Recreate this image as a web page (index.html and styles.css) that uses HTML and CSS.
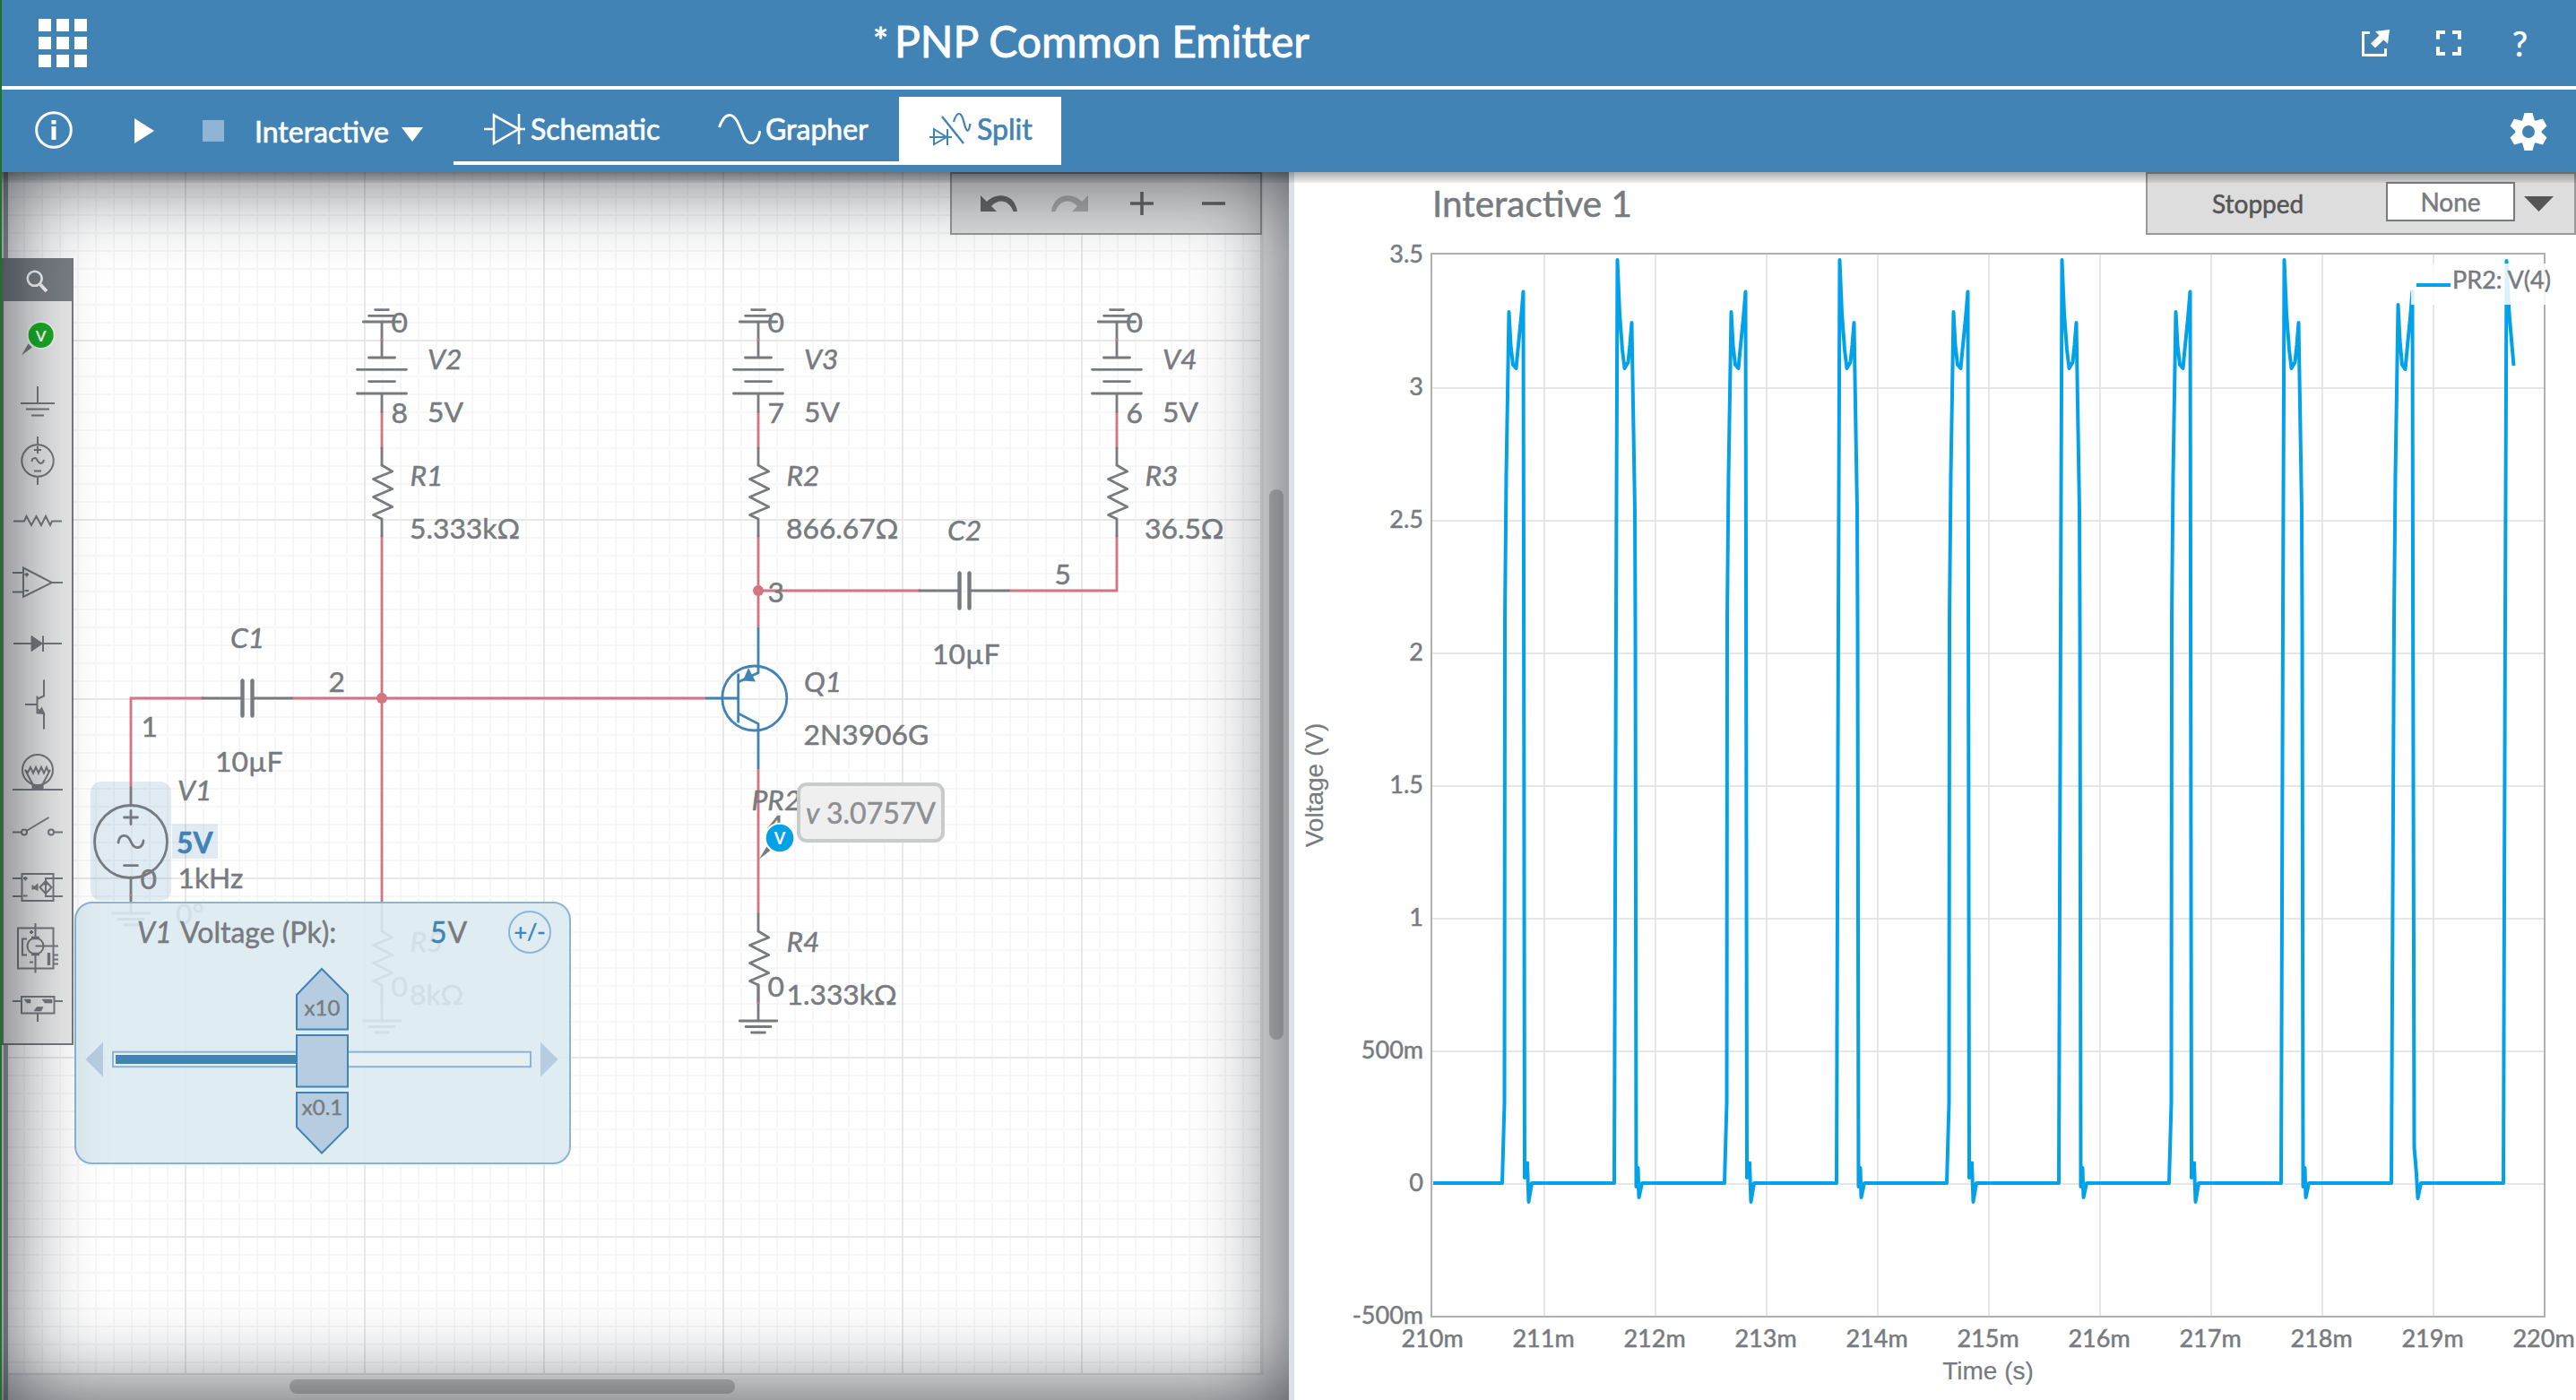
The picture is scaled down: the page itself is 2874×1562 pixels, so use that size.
FILE: index.html
```html
<!DOCTYPE html>
<html lang="en">
<head>
<meta charset="utf-8">
<title>PNP Common Emitter</title>
<link rel="stylesheet" href="styles.css">
</head>
<body>
<header class="titlebar">
  <div class="apps"><i></i><i></i><i></i><i></i><i></i><i></i><i></i><i></i><i></i></div>
  <h1 class="doc-title"><span class="dirty">*</span><span class="doc-name">PNP Common Emitter</span></h1>
  <nav class="title-actions">
    <svg width="34" height="34" viewBox="2633 30 34 34"><path d="M2643 35.5H2635.500V60.500H2660.500V53" fill="none" stroke="#fff" stroke-width="3"/><path d="M2649 34l16-2-2 16-4.500-4.500-9.500 9-5-5 9.500-9z" fill="#fff"/></svg>
    <svg width="28" height="28" viewBox="0 0 28 28"><path d="M10 2H2v8M18 2h8v8M26 18v8h-8M10 26H2v-8" fill="none" stroke="#fff" stroke-width="4"/></svg>
    <span class="help">?</span>
  </nav>
</header>
<section class="toolbar">
  <svg class="info" width="42" height="42" viewBox="0 0 42 42"><circle cx="21" cy="21" r="19.300" fill="none" stroke="#fff" stroke-width="3"/><path d="M18.500 10h5v4.500h-5zM18.500 17h5v15h-5z" fill="#fff"/></svg>
  <svg class="play" width="22" height="28" viewBox="0 0 22 28"><path d="M0 0L22 14L0 28z" fill="#fff"/></svg>
  <span class="stop"></span>
  <span class="mode">Interactive</span>
  <svg class="caret" width="24" height="16" viewBox="0 0 24 16"><path d="M0 0H24L12 16z" fill="#fff"/></svg>
  <div class="tabs">
    <a class="tab tab-schematic"><svg width="46" height="36" viewBox="540 125 46 36" fill="none" stroke="#fff" stroke-width="2.600"><path d="M540 143h11M551 127.500v31.500L578.500 143zM579 126v34M579 143h7"/></svg><span>Schematic</span></a>
    <a class="tab tab-grapher"><svg width="48" height="36" viewBox="801 128 48 36" fill="none" stroke="#fff" stroke-width="2.800"><path d="M802.500 144C806 134 810 130.500 814 130.500C822 130.500 826 146 830 155C833 161 837 162 840 161.500C844 160 847 154 848 148"/></svg><span>Grapher</span></a>
    <a class="tab tab-split"><svg width="48" height="40" viewBox="1036 124 48 40" fill="none" stroke="#4283b6" stroke-width="2"><path d="M1037 153h25M1042 144v17L1056 153zM1057 144v18"/><path d="M1051 130L1075 160" stroke-width="2.400"/><path d="M1064 136C1066 129 1068 127 1070 127C1074 127 1075 136 1077 142C1079 148 1081 147 1082.500 138" stroke-width="2.200"/></svg><span>Split</span></a>
  </div>
  <svg class="gear" width="42" height="42" viewBox="-21 -21 42 42"><g fill="#fff"><circle r="14.500"/><g id="teeth"><path d="M-7 -12L-4.500 -21H4.500L7 -12V12L4.500 21H-4.500L-7 12z"/></g><use href="#teeth" transform="rotate(60)"/><use href="#teeth" transform="rotate(120)"/></g><circle r="7" fill="#4283b6"/></svg>
</section>
<main class="workspace">
  <section class="schematic">
    <svg class="sheet" width="1436" height="1370" viewBox="2 192 1436 1370">
      <defs>
        <pattern id="minor" x="6" y="179" width="20" height="20" patternUnits="userSpaceOnUse"><path d="M0 0H20V2H2V20H0z" fill="#f7f7f7"/></pattern>
        <pattern id="major" x="6" y="179" width="200" height="200" patternUnits="userSpaceOnUse"><path d="M0 0H200V2H2V200H0z" fill="#e8e8e8"/></pattern>
        <g id="ground"><path class="w" d="M0 0V40M-20.700 40H20.700M-14 46.500H14M-7.500 53H7.500"/><path class="net" d="M0 18.500v2.500"/></g>
        <g id="resistor"><path class="w" d="M0 0V19"/><path class="w zig" d="M0 19L11.700 26L-9.500 34.500L11.700 45.500L-9.500 54.500L11.700 65.500L-9.500 74.500L0 79V98"/></g>
        <g id="battery"><path class="w" d="M-7.500 0H7.500M-14.500 6.700H14.500M-20.700 13.400H20.700M0 13.400V53.400M-14.500 53.400H14.500M-27.500 66.700H27.500M-14.500 80H14.500M-27.500 93.400H27.500M0 93.400V114"/><path class="net" d="M0 32v3"/></g>
        <g id="capacitor"><path class="w" d="M-50 0H-6M6 0H49"/><path class="plate" d="M-5.500 -19.500V19.500M5.500 -19.500V19.500"/></g>
      </defs>
      <rect x="2" y="192" width="1436" height="1370" fill="#f1f1f1"/>
      <rect x="9" y="192" width="1397" height="1340" fill="#fff"/>
      <rect x="9" y="192" width="1397" height="1340" fill="url(#minor)"/>
      <rect x="9" y="192" width="1397" height="1340" fill="url(#major)"/>
      <rect x="4" y="192" width="5" height="1370" fill="#9fa2a7"/>
      <rect x="1406" y="192" width="4" height="1340" fill="#e4e4e4"/>
      <rect x="9" y="1532" width="1401" height="2" fill="#e0e0e0"/>
      <rect x="1416" y="546" width="16" height="614" rx="8" fill="#c2c2c2"/>
      <rect x="323" y="1539" width="497" height="16" rx="8" fill="#c2c2c2"/>

      <rect x="101" y="872" width="90" height="133" rx="12" fill="#4283b6" fill-opacity=".16"/>
      <rect x="192" y="919.500" width="51" height="38.500" fill="#4283b6" fill-opacity=".16"/>

      <path class="net" d="M426 459V501M426 597V1021M846 459V501M846 597V700M1246 459V501M1246 597V659H1125M1027 659H846M227 779H146V879M325 779H787M846 858V1020"/>
      <use href="#battery" x="426" y="345.600"/><use href="#battery" x="846" y="345.600"/><use href="#battery" x="1246" y="345.600"/>
      <use href="#resistor" x="426" y="500"/><use href="#resistor" x="846" y="500"/><use href="#resistor" x="1246" y="500"/>
      <use href="#resistor" x="426" y="1020"/><use href="#resistor" x="846" y="1020"/>
      <use href="#ground" x="426" y="1099"/><use href="#ground" x="846" y="1099"/><use href="#ground" x="146" y="979"/>
      <use href="#capacitor" x="276" y="779"/><use href="#capacitor" x="1076" y="659"/>
      <circle cx="426" cy="779" r="6" fill="#d37480"/><circle cx="846" cy="659" r="6" fill="#d37480"/>

      <g class="w"><path d="M146 879V899M138.500 912H153.500M146 904.500V919.500M138.500 965.700H153.500M132 940C133 931 142 929 146 939S159 947 160 938"/><circle cx="146" cy="939" r="40.500"/></g>
      <g class="bjt"><path d="M846 700V750.500L823.700 761M823.700 751.500V806.500M787 779H823.700M823.700 796L846 807.500V858"/><circle cx="841.800" cy="779" r="36"/><path d="M835 745L843 760.500L829 759.500z" fill="#4283b6" stroke="none"/></g>

      <g class="lbl">
        <text x="436.500" y="371">0</text><text x="436.500" y="471.500">8</text><text x="477" y="470.700">5V</text>
        <text x="856.500" y="371">0</text><text x="856.500" y="471.500">7</text><text x="897" y="470.700">5V</text>
        <text x="1256.500" y="371">0</text><text x="1256.500" y="471.500">6</text><text x="1297" y="470.700">5V</text>
        <text x="457" y="601">5.333kΩ</text><text x="877" y="601">866.67Ω</text><text x="1277" y="601">36.5Ω</text>
        <text x="366.500" y="771.500">2</text><text x="856.500" y="671.500">3</text><text x="1176.500" y="651.500">5</text>
        <text x="157.500" y="821.500">1</text><text x="240" y="861">10µF</text><text x="1040" y="740.700">10µF</text>
        <text x="896.500" y="830.700">2N3906G</text><text x="877.500" y="1120.700">1.333kΩ</text><text x="856.500" y="1111.700">0</text>
        <text x="198.500" y="990.700">1kHz</text><text x="156.500" y="991.500">0</text><text x="196" y="1030.700">0°</text>
        <text x="457" y="1120.700">8kΩ</text><text x="436.500" y="1111.500">0</text><text x="856" y="931.700">4</text>
        <g class="it">
          <text x="477" y="411.700">V2</text><text x="897" y="411.700">V3</text><text x="1297" y="411.700">V4</text>
          <text x="457.500" y="541.700">R1</text><text x="877.500" y="541.700">R2</text><text x="1277.500" y="541.700">R3</text>
          <text x="257" y="722.500">C1</text><text x="1057" y="602.700">C2</text><text x="897" y="771.700">Q1</text>
          <text x="838.500" y="904">PR2</text><text x="877.500" y="1061.700">R4</text><text x="457.500" y="1061.700">R5</text><text x="198" y="892.700">V1</text>
        </g>
        <text class="val" x="197" y="951.700">5V</text>
      </g>

      <path d="M847 958.500L855.500 944.500L860 948.500z" fill="#777b80"/>
      <circle cx="870" cy="935" r="16.300" fill="#03a1e8" stroke="#fff" stroke-width="2"/>
      <text class="probe-v" x="870" y="941.500">V</text>
      <rect x="891" y="875" width="161" height="63" rx="9" fill="#eee" fill-opacity=".93" stroke="#c8cacb" stroke-width="4"/>
      <text class="reading" x="899" y="918.500"><tspan font-style="italic">v</tspan><tspan x="922">3.0757V</tspan></text>
    </svg>

    <div class="edit-bar">
      <svg width="42" height="20" viewBox="1094 216 42 20"><path d="M1094 217v18h18l-6-6c8-9 20-7 24.500 6h4.500c-3-22-25-21-34-11z" fill="#666"/></svg>
      <svg width="42" height="20" viewBox="1094 216 42 20"><path transform="translate(2229 0) scale(-1 1)" d="M1094 217v18h18l-6-6c8-9 20-7 24.500 6h4.500c-3-22-25-21-34-11z" fill="#a9a9a9"/></svg>
      <svg width="26" height="26" viewBox="0 0 26 26"><path d="M13 0V26M0 13H26" stroke="#666" stroke-width="3.600"/></svg>
      <svg width="26" height="26" viewBox="0 0 26 26"><path d="M0 13H26" stroke="#666" stroke-width="3.600"/></svg>
    </div>

    <div class="library">
      <div class="search"><svg width="24" height="26" viewBox="29 301 24 26"><circle cx="38.700" cy="310.800" r="8" fill="none" stroke="#fff" stroke-width="2.600"/><path d="M45 317.500L52 325" stroke="#fff" stroke-width="4"/></svg></div>
      <svg viewBox="4 342 76 68"><path d="M24 396.500L31.500 383.500L36 387.500z" fill="#777b80" stroke="none"/><circle cx="45.700" cy="374" r="15" fill="#19b024" stroke="#f6f6f6" stroke-width="2"/><text class="lib-v" x="45.700" y="380.500">V</text></svg>
      <svg viewBox="4 410 76 68"><path d="M42 431V450M23 450H61M29 456.500H55M35 463.500H49"/></svg>
      <svg viewBox="4 478 76 68"><circle cx="42" cy="514" r="17.700"/><path d="M42 487V496M42 532V541M38 502H46M42 498V506M38 525.500H46M35.500 515C36 510 40 510 42 514S48 518 49 513"/></svg>
      <svg viewBox="4 546 76 68"><path d="M15 581.500H27L29.500 576L35 586L40.500 576L46 586L51 576L56 586L58 581.500H69"/></svg>
      <svg viewBox="4 614 76 68"><path d="M26 633.500V666L58 650zM14 639H26M14 660.500H26M58 650H70M27.500 641H32M29.700 639V643.500M27.500 659H32"/></svg>
      <svg viewBox="4 682 76 68"><path d="M15 718H69M48 709.500V727"/><path d="M35 709.500V726.500L47.500 718z" fill="#777b80" stroke-width="1"/></svg>
      <svg viewBox="4 750 76 68"><path d="M28 786H41.500M41.500 776.500V796M41.500 780L49 776.500V758.500M41.500 791L49 796V813.500"/><path d="M42.500 795.500L46.500 790.500L49 796z" fill="#777b80"/></svg>
      <svg viewBox="4 818 76 68"><circle cx="42" cy="859" r="17"/><path d="M14 881H70M37 876L28 859L31 862L34 856L37 862.500L40 856L43 862.500L46 856L49 862.500L52 856L54 861L56 859L47 876"/><path d="M36.500 876H47.500V880H36.500z" fill="#777b80"/></svg>
      <svg viewBox="4 886 76 68"><path d="M14 928.500H24M60 928.500H70M29.500 927L54.500 912"/><circle cx="27" cy="928.500" r="3"/><circle cx="57" cy="928.500" r="3"/></svg>
      <svg viewBox="4 954 76 68"><rect x="24.500" y="975" width="35" height="30"/><path d="M14 980H25M14 1000H25M70 980H51V1000H70M51 983L44.500 990L51 997L57.500 990z"/><path d="M26 980h4.500M28.300 978v4.500M26 999.500h4.500M36.500 987.500v5M36.500 990h2l3-2.500v5zM48.500 986.500h5"/></svg>
      <svg viewBox="4 1022 76 68"><rect x="20" y="1035.500" width="39.500" height="45"/><circle cx="39.500" cy="1055.500" r="9"/><path d="M39.500 1030V1047M39.500 1064V1085.500M30 1047.500H25V1065.500H30M39.500 1055.500H65M59 1065.500H65M59 1070.500H65M59 1075.500H65M33 1040H37M35 1038V1042M33 1073.500H37"/><path d="M35 1046.500H44M35 1064.500H44M54.500 1063V1077" stroke-width="3.400"/></svg>
      <svg viewBox="4 1090 76 68"><rect x="24" y="1112" width="36.500" height="18.500"/><path d="M14 1117H24M60 1117H70M42 1131V1140"/><path d="M27 1115H34V1119H30zM47 1115H58V1119H50zM38 1128L41 1123.500H48L46 1128z" fill="#777b80" stroke-width=".6"/></svg>
    </div>

    <div class="popup">
      <div class="popup-head"><em>V1</em><span class="popup-name">Voltage (Pk):</span><span class="popup-value"><b>5</b>V</span><span class="sign">+/-</span></div>
      <svg class="slider" width="549" height="221" viewBox="86 1076 549 221">
        <path d="M95.500 1182L115 1162.500V1201.500zM622.500 1182L603 1162.500V1201.500z" fill="#b5cce1"/>
        <rect x="126" y="1173.700" width="466" height="16.500" fill="#e6f0f4" stroke="#8cb4d5" stroke-width="2"/>
        <rect x="129" y="1177" width="201" height="10" fill="#4283b6"/>
        <g fill="#b5cce1" stroke="#4283b6" stroke-width="2"><path d="M331 1148.500V1110L359 1081L388 1110V1148.500zM331 1155H388V1212.500H331zM331 1219H388V1257.500L359 1286.500L331 1257.500z"/></g>
        <text x="359.500" y="1133">x10</text><text x="359.500" y="1243.500">x0.1</text>
      </svg>
    </div>
    <div class="vignette"></div>
  </section>

  <section class="grapher">
    <div class="graph-head">
      <h2>Interactive 1</h2>
      <div class="run-bar"><span class="state">Stopped</span><span class="trigger">None</span><svg width="33" height="17" viewBox="0 0 33 17"><path d="M0 0H33L16.500 17z" fill="#555"/></svg></div>
    </div>
    <svg class="plot" width="1430" height="1284" viewBox="1444 278 1430 1284">
      <defs>
        <path id="pair" d="M1599 1320H1676L1678.500 1230L1679 690L1680.500 530L1683.500 348L1685.500 385L1688 407L1691.500 411L1694.500 380L1697 355L1699.500 325.500L1700 645L1701 1314L1704 1297.500L1705.500 1341L1709 1320H1801L1803 690L1804.500 290L1807 350L1810 390L1812.500 411L1816.500 404L1818.500 385L1820.500 360L1821.500 420L1824 570L1824.500 690L1825.500 1324L1827.500 1303L1828.500 1336L1832 1320H1847"/>
      </defs>
      <path class="grid" d="M1723 284V1468M1847 284V1468M1971 284V1468M2095 284V1468M2219 284V1468M2343 284V1468M2467 284V1468M2591 284V1468M2715 284V1468M1598 433H2838M1598 581H2838M1598 729H2838M1598 877H2838M1598 1025H2838M1598 1173H2838M1598 1321H2838"/>
      <rect class="frame" x="1597" y="283" width="1242" height="1186"/>
      <g class="trace"><use href="#pair"/><use href="#pair" x="248"/><use href="#pair" x="496"/><use href="#pair" x="744"/>
        <path d="M2591 1320H2668L2671 690L2672.500 530L2675.500 340L2677.500 380L2680 407L2683.500 412L2686.500 380L2689 355L2691.500 325L2692 645L2693.500 1280L2696 1310L2697.500 1337L2701 1320H2793L2795 690L2796.500 291L2799.500 350L2804.500 408"/>
      </g>
      <rect x="2690" y="294" width="156" height="46" fill="#fff" fill-opacity=".85"/>
      <path d="M2696 318H2734" stroke="#03a1e8" stroke-width="4"/>
      <g class="axis">
        <text x="2736" y="322">PR2: V(4)</text>
        <g text-anchor="end"><text x="1588" y="293">3.5</text><text x="1588" y="440.700">3</text><text x="1588" y="588.700">2.5</text><text x="1588" y="736.700">2</text><text x="1588" y="884.700">1.5</text><text x="1588" y="1032.700">1</text><text x="1588" y="1180.700">500m</text><text x="1588" y="1328.700">0</text><text x="1588" y="1476.500">-500m</text></g>
        <g text-anchor="middle"><text x="1598" y="1502.700">210m</text><text x="1722" y="1502.700">211m</text><text x="1846" y="1502.700">212m</text><text x="1970" y="1502.700">213m</text><text x="2094" y="1502.700">214m</text><text x="2218" y="1502.700">215m</text><text x="2342" y="1502.700">216m</text><text x="2466" y="1502.700">217m</text><text x="2590" y="1502.700">218m</text><text x="2714" y="1502.700">219m</text><text x="2838" y="1502.700">220m</text>
        <g class="axis-name"><text x="2218" y="1539">Time (s)</text><text transform="translate(1476 876) rotate(-90)">Voltage (V)</text></g></g>
      </g>
    </svg>
  </section>
  <div class="drop-shade"></div>
</main>
</body>
</html>
```
FILE: styles.css
```css
* { box-sizing: border-box; }
body {
  margin: 0;
  width: 2874px;
  height: 1562px;
  overflow: hidden;
  border-left: 2px solid #23702a;
  font-family: Lato, "Open Sans", sans-serif;
  color: #777b80;
  -webkit-text-stroke: .5px;
  display: flex;
  flex-direction: column;
}
svg { display: block; flex: none; }

.titlebar {
  height: 100px;
  background: #4283b6;
  border-bottom: 4px solid #fff;
  display: flex;
  align-items: center;
  color: #fff;
}
.apps {
  margin-left: 41px;
  width: 54px;
  display: grid;
  grid-template-columns: repeat(3, 14px);
  gap: 6px;
}
.apps i { height: 14px; background: #fff; }
.doc-title {
  margin: -5px 0 0 877px;
  width: 500px;
  font-size: 48px;
  line-height: 56px;
  font-weight: 400;
  -webkit-text-stroke: .9px;
  white-space: nowrap;
  display: flex;
  gap: 10px;
}
.dirty { width: 14px; font-size: 40px; }
.title-actions {
  margin-left: auto;
  padding-right: 50px;
  display: flex;
  align-items: center;
  gap: 50px;
}
.help { width: 21px; margin-left: 7px; font-size: 38px; line-height: 40px; }

.toolbar {
  height: 92px;
  flex: none;
  background: #4283b6;
  color: #fff;
  -webkit-text-stroke: .7px;
  display: flex;
  align-items: center;
  font-size: 32px;
  line-height: 40px;
}
.info { margin-left: 37px; margin-top: -2px; }
.play { margin-left: 69px; }
.stop { margin-left: 54px; width: 24px; height: 24px; background: #90b4d4; }
.mode { margin-left: 34px; width: 164px; margin-top: 1px; white-space: nowrap; }
.caret { margin-top: 8px; }
.tabs {
  margin-left: 34px;
  width: 678px;
  height: 76px;
  border-bottom: 4px solid #fff;
  display: flex;
}
.tab { display: flex; align-items: center; gap: 6px; }
.tab-schematic { width: 262px; padding-left: 34px; }
.tab-grapher { width: 235px; padding-left: 33px; gap: 5px; }
.tab-split { width: 181px; padding-left: 33px; background: #fff; color: #4283b6; }
.gear { margin-left: auto; margin-right: 32px; margin-top: 1px; }

.workspace { position: relative; flex: 1; display: flex; }
.schematic {
  position: relative;
  width: 1442px;
  border-right: 6px solid #dbe1e5;
  overflow: hidden;
}
.vignette {
  position: absolute;
  inset: 0;
  box-shadow: inset 0 0 100px rgba(10, 16, 26, .74);
}
.drop-shade {
  position: absolute;
  left: 0;
  right: 0;
  top: 0;
  height: 12px;
  background: linear-gradient(rgba(0, 0, 0, .32), rgba(0, 0, 0, .06));
}

.w { fill: none; stroke: #777b80; stroke-width: 2.800; stroke-linecap: round; stroke-linejoin: round; }
.net { fill: none; stroke: #d37480; stroke-width: 2.800; }
.plate { stroke: #777b80; stroke-width: 4.400; stroke-linecap: round; }
.bjt { fill: none; stroke: #4283b6; stroke-width: 2.800; }
.lbl { font-size: 31.800px; fill: #777b80; stroke: #777b80; stroke-width: .5; }
.it { font-style: italic; }
.val { font-weight: 700; fill: #4283b6; stroke: #4283b6; }
.probe-v { font-size: 18px; font-weight: 700; fill: #fff; text-anchor: middle; }
.reading { font-size: 32px; fill: #8d9093; stroke: #8d9093; stroke-width: .5; }

.edit-bar {
  position: absolute;
  left: 1058px;
  top: 0;
  width: 348px;
  height: 70px;
  background: #ddd;
  border: 2px solid #999;
  display: flex;
  align-items: center;
  padding-left: 32px;
  gap: 37px;
}
.edit-bar svg:nth-child(3) { margin-left: 9px; }
.edit-bar svg:nth-child(4) { margin-left: 17px; }

.library {
  position: absolute;
  left: 0;
  top: 96px;
  width: 80px;
  height: 878px;
  background: #ebebeb;
  border: 2px solid #777b80;
  border-top: 0;
}
.library > svg { width: 76px; height: 68px; fill: none; stroke: #777b80; stroke-width: 2; }
.library .search {
  height: 48px;
  margin-bottom: 6px;
  background: #7b7f86;
  display: flex;
  align-items: center;
  padding: 3px 0 0 25px;
}
.lib-v { font-size: 17px; font-weight: 700; fill: #fff; stroke: none; text-anchor: middle; }

.popup {
  position: absolute;
  left: 81px;
  top: 814px;
  width: 554px;
  height: 293px;
  border: 2px solid #8cb4d5;
  border-radius: 20px;
  background: rgba(220, 234, 241, .9);
  overflow: hidden;
}
.popup-head {
  height: 68px;
  padding: 0 0 5px 68px;
  display: flex;
  align-items: center;
  font-size: 32px;
  line-height: 40px;
  white-space: nowrap;
}
.popup-head em { width: 48px; }
.popup-name { width: 279px; }
.popup-value { width: 87px; }
.popup-value b { font-weight: 400; color: #4283b6; margin-right: 1px; }
.sign {
  width: 48px;
  height: 48px;
  border: 2px solid #8cb4d5;
  border-radius: 50%;
  color: #4283b6;
  font-size: 25px;
  line-height: 43px;
  text-align: center;
}
.slider { margin-left: 1px; }
.slider text { font-size: 24px; fill: #777b80; stroke: #777b80; stroke-width: .4; text-anchor: middle; }

.grapher { flex: 1; background: #fff; }
.graph-head { height: 86px; display: flex; justify-content: space-between; }
.graph-head h2 {
  margin: 11px 0 0 154px;
  font-size: 40.400px;
  line-height: 48px;
  font-weight: 400;
}
.run-bar {
  width: 480px;
  height: 70px;
  background: #ddd;
  border: 2px solid #999;
  display: flex;
  align-items: center;
  font-size: 28px;
}
.state { width: 194px; margin-left: 72px; color: #555; }
.trigger {
  width: 144px;
  height: 44px;
  margin: -4px 10px 0 0;
  border: 2px solid #777b80;
  background: #fff;
  line-height: 40px;
  text-align: center;
}
.plot { overflow: visible; }
.grid { stroke: #e6e6e6; stroke-width: 2; fill: none; }
.frame { fill: none; stroke: #b0b0b0; stroke-width: 2; }
.trace { fill: none; stroke: #03a1e8; stroke-width: 4; stroke-linejoin: round; }
.axis { font-size: 27px; fill: #777b80; stroke: #777b80; stroke-width: .5; }
.axis-name { font-family: "Liberation Sans", Arial, sans-serif; font-size: 28px; stroke-width: .2; }
```
